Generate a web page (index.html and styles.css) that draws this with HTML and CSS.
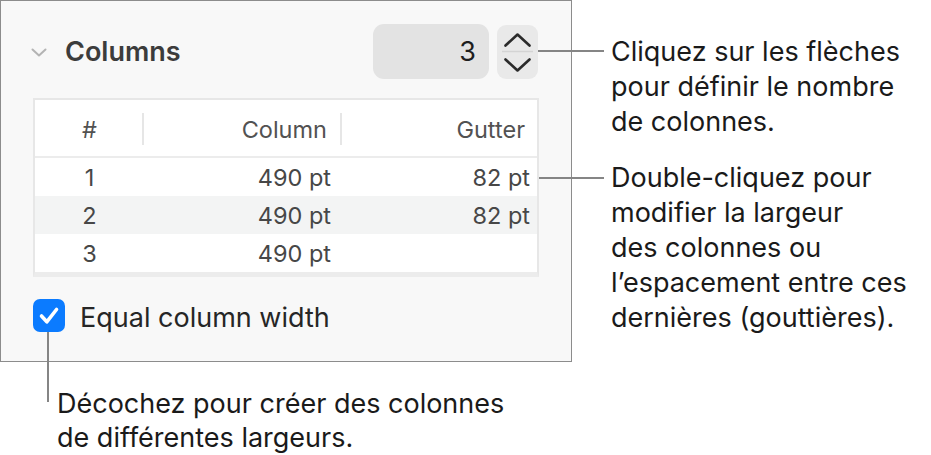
FILE: index.html
```html
<!DOCTYPE html>
<html lang="fr">
<head>
<meta charset="utf-8">
<title>Columns</title>
<link rel="stylesheet" href="styles.css">
</head>
<body>
<div class="stage">
  <section class="panel">
    <div class="panel-head">
      <svg class="disclosure" width="16" height="9" viewBox="0 0 16 9"><path d="M1.5 1.5 L8 7.5 L14.5 1.5" fill="none" stroke="#b4b4b4" stroke-width="2" stroke-linecap="round" stroke-linejoin="round"/></svg>
      <h2 class="title">Columns</h2>
      <div class="count-field">3</div>
      <div class="stepper">
        <svg width="41" height="54" viewBox="0 0 41 54">
          <path d="M8.5 20.5 L20.5 9.5 L32.5 20.5" fill="none" stroke="#2b2b2b" stroke-width="2.6" stroke-linecap="round" stroke-linejoin="round"/>
          <line x1="5" y1="26.5" x2="36" y2="26.5" stroke="#d4d4d4" stroke-width="1.5"/>
          <path d="M8.5 34.5 L20.5 45.5 L32.5 34.5" fill="none" stroke="#2b2b2b" stroke-width="2.6" stroke-linecap="round" stroke-linejoin="round"/>
        </svg>
      </div>
    </div>
    <div class="table">
      <div class="row head">
        <div class="cell num"><span>#</span></div>
        <div class="cell val"><span>Column</span></div>
        <div class="cell val last"><span>Gutter</span></div>
      </div>
      <div class="row">
        <div class="cell num">1</div>
        <div class="cell val">490 pt</div>
        <div class="cell val last">82 pt</div>
      </div>
      <div class="row alt">
        <div class="cell num">2</div>
        <div class="cell val">490 pt</div>
        <div class="cell val last">82 pt</div>
      </div>
      <div class="row">
        <div class="cell num">3</div>
        <div class="cell val">490 pt</div>
        <div class="cell val last"></div>
      </div>
    </div>
    <label class="check-row">
      <span class="checkbox">
        <svg width="32" height="33" viewBox="0 0 32 33"><path d="M8.5 17 L13.8 22.8 L23.5 10.5" fill="none" stroke="#fff" stroke-width="3.6" stroke-linecap="round" stroke-linejoin="round"/></svg>
      </span>
      <span class="check-label">Equal column width</span>
    </label>
  </section>

  <div class="notes-right">
    <p class="note">Cliquez sur les flèches<br>pour définir le nombre<br>de colonnes.</p>
    <p class="note">Double-cliquez pour<br>modifier la largeur<br>des colonnes ou<br>l’espacement entre ces<br>dernières (gouttières).</p>
  </div>

  <div class="notes-bottom">
    <p class="note">Décochez pour créer des colonnes<br>de différentes largeurs.</p>
  </div>

  <div class="leader leader-stepper"></div>
  <div class="leader leader-table"></div>
  <div class="leader leader-check"></div>
</div>
</body>
</html>
```

FILE: styles.css
```css
* { box-sizing: border-box; }

html, body {
  margin: 0;
  background: #ffffff;
}

body {
  font-family: Inter, "Noto Sans", "Liberation Sans", sans-serif;
  color: #1c1c1c;
}

.stage {
  position: relative;
  width: 931px;
  height: 455px;
  display: grid;
  grid-template-columns: 572px 1fr;
  grid-template-rows: 362px 1fr;
  overflow: hidden;
}

/* ---------- panel ---------- */
.panel {
  grid-column: 1;
  grid-row: 1;
  background: #f8f8f8;
  border: 1px solid #8c8c8c;
  display: flex;
  flex-direction: column;
}

.panel-head {
  display: flex;
  align-items: center;
  height: 55px;
  margin-top: 23px;
  padding-left: 30px;
  padding-right: 33px;
}

.disclosure {
  flex: none;
  margin-right: 18px;
  margin-top: 1px;
}

.title {
  flex: 1;
  margin: 0 0 1px;
  font-size: 27px;
  font-weight: 600;
  color: #3c3c3c;
}

.count-field {
  width: 116px;
  height: 55px;
  border-radius: 11px;
  background: #e3e3e3;
  display: flex;
  align-items: center;
  justify-content: flex-end;
  padding-right: 13px;
  font-size: 27px;
  color: #1e1e1e;
  margin-right: 8px;
}

.stepper {
  width: 41px;
  height: 54px;
  border-radius: 9px;
  background: #e9e9e9;
  display: flex;
}

/* ---------- table ---------- */
.table {
  margin: 19px 0 0 32px;
  width: 506px;
  background: #ffffff;
  border: 2px solid #e7e7e7;
  border-bottom-width: 5px;
  border-bottom-color: #ececec;
}

.row {
  display: grid;
  grid-template-columns: 107px 198px 1fr;
  height: 38px;
  align-items: center;
  font-size: 23.5px;
  color: #474747;
}

.row.alt {
  background: #f3f4f4;
}

.row.head {
  height: 58px;
  border-bottom: 2px solid #ececec;
  color: #525252;
}

.cell.num {
  text-align: center;
  padding-left: 2px;
}

.cell.val {
  text-align: right;
  padding-right: 9px;
}

.cell.val.last {
  padding-right: 7px;
}

.head .cell {
  height: 32px;
  display: flex;
  align-items: center;
  margin-top: 2px;
}

.head .cell.num {
  justify-content: center;
}

.head .cell.val {
  justify-content: flex-end;
  border-left: 2px solid #e6e6e6;
  padding-right: 13px;
}

.head .cell.val.last {
  padding-right: 12px;
}

/* ---------- checkbox ---------- */
.check-row {
  display: flex;
  align-items: center;
  margin: 20px 0 0 32px;
}

.checkbox {
  width: 32px;
  height: 33px;
  border-radius: 7px;
  background: #0b7bff;
  display: flex;
  margin-right: 15px;
}

.check-label {
  font-size: 27px;
  color: #262626;
  padding-top: 4px;
}

/* ---------- callouts ---------- */
.note {
  margin: 0;
  font-size: 27px;
  line-height: 35px;
  color: #1a1a1a;
}

.notes-right {
  grid-column: 2;
  grid-row: 1;
  padding: 34px 0 0 39px;
  display: flex;
  flex-direction: column;
  gap: 21px;
}

.notes-bottom {
  grid-column: 1 / 3;
  grid-row: 2;
  padding: 25px 0 0 57px;
}

.notes-bottom .note {
  line-height: 34px;
}

/* leader lines lie over the panel edge */
.leader {
  position: absolute;
  background: #858585;
}

.leader-stepper {
  left: 538px;
  top: 50px;
  width: 66px;
  height: 2px;
}

.leader-table {
  left: 539px;
  top: 177px;
  width: 65px;
  height: 2px;
}

.leader-check {
  left: 47px;
  top: 332px;
  width: 2px;
  height: 70px;
}
```
